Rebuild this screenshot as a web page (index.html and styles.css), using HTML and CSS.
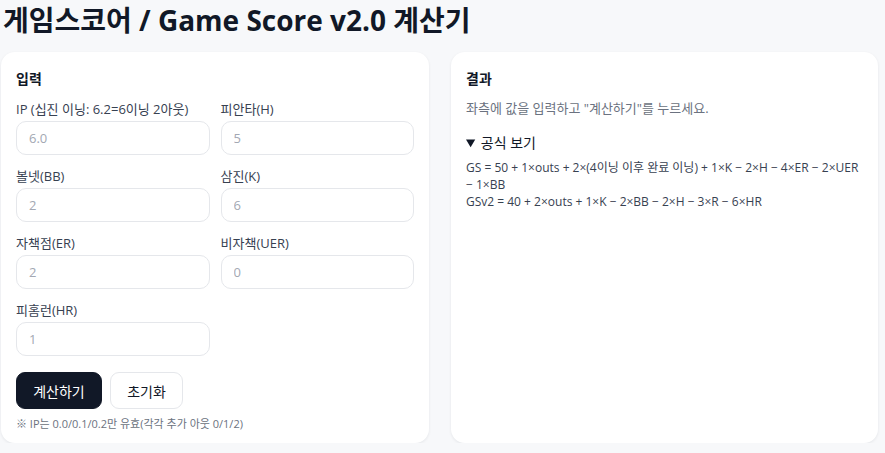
FILE: index.html
```html
<!DOCTYPE html>
<html lang="ko">
<head>
<meta charset="utf-8">
<title>게임스코어 계산기</title>
<link rel="stylesheet" href="styles.css">
</head>
<body>
<div class="page">
  <h1 class="title">게임스코어 / Game Score v2.0 계산기</h1>
  <div class="grid">
    <section class="card">
      <h2 class="card-title card-title-input">입력</h2>
      <div class="fields">
        <label class="field"><span class="label">IP (십진 이닝: 6.2=6이닝 2아웃)</span><input class="input" placeholder="6.0"></label>
        <label class="field"><span class="label">피안타(H)</span><input class="input" placeholder="5"></label>
        <label class="field"><span class="label">볼넷(BB)</span><input class="input" placeholder="2"></label>
        <label class="field"><span class="label">삼진(K)</span><input class="input" placeholder="6"></label>
        <label class="field"><span class="label">자책점(ER)</span><input class="input" placeholder="2"></label>
        <label class="field"><span class="label">비자책(UER)</span><input class="input" placeholder="0"></label>
        <label class="field"><span class="label">피홈런(HR)</span><input class="input" placeholder="1"></label>
      </div>
      <div class="actions">
        <button class="btn btn-primary">계산하기</button>
        <button class="btn btn-ghost">초기화</button>
      </div>
      <p class="note">※ IP는 0.0/0.1/0.2만 유효(각각 추가 아웃 0/1/2)</p>
    </section>
    <section class="card">
      <h2 class="card-title">결과</h2>
      <p class="hint">좌측에 값을 입력하고 "계산하기"를 누르세요.</p>
      <details class="formula" open>
        <summary class="summary">공식 보기</summary>
        <p class="eq">GS = 50 + 1×outs + 2×(4이닝 이후 완료 이닝) + 1×K − 2×H − 4×ER − 2×UER − 1×BB</p>
        <p class="eq">GSv2 = 40 + 2×outs + 1×K − 2×BB − 2×H − 3×R − 6×HR</p>
      </details>
    </section>
  </div>
</div>
</body>
</html>
```
FILE: styles.css
```css
* { box-sizing: border-box; }
html, body { margin: 0; padding: 0; }
body {
  background: #f7f8fa;
  color: #111827;
  font-family: "Open Sans", "Noto Sans CJK KR", sans-serif;
}
.page { padding: 0 7px 0 1px; }
.title {
  margin: 0 0 12px 2px;
  font-size: 28px;
  line-height: 40px;
  font-weight: 700;
  color: #111827;
}
.grid {
  display: grid;
  grid-template-columns: 428px 427px;
  column-gap: 22px;
}
.card {
  background: #fff;
  border-radius: 14px;
  box-shadow: 0 1px 3px rgba(17, 24, 39, 0.08);
  padding: 16px 15px 14px;
  height: 391px;
}
.card-title {
  margin: 0 0 8px;
  font-size: 14px;
  line-height: 22px;
  font-weight: 700;
}
.card-title-input { margin-bottom: 10px; }
.fields {
  display: grid;
  grid-template-columns: 1fr 1fr;
  column-gap: 11px;
  row-gap: 12px;
}
.field { display: flex; flex-direction: column; gap: 3px; }
.label { font-size: 13px; line-height: 18px; color: #374151; }
.input {
  height: 34px;
  border: 1px solid #e5e7eb;
  border-radius: 10px;
  padding: 0 12px;
  font: inherit;
  font-size: 13px;
  color: #111827;
  background: #fff;
}
.input::placeholder { color: #a3a8b3; }
.actions { display: flex; gap: 8px; margin-top: 16px; }
.btn {
  height: 37px;
  border-radius: 9px;
  font: inherit;
  font-size: 14px;
  padding: 0 14px;
}
.btn-primary { background: #111827; color: #fff; border: 1px solid #111827; width: 86px; }
.btn-ghost { background: #fff; color: #111827; border: 1px solid #e5e7eb; width: 73px; }
.note { margin: 7px 0 0; font-size: 11px; line-height: 16px; color: #6b7280; }
.hint { margin: 0 0 15px; font-size: 13px; line-height: 20px; color: #6b7280; }
.formula { color: #111827; }
.summary { font-size: 14px; line-height: 20px; cursor: pointer; margin-bottom: 7px; }
.eq { margin: 0 0 1px; font-size: 12px; line-height: 16.5px; color: #374151; }
```
